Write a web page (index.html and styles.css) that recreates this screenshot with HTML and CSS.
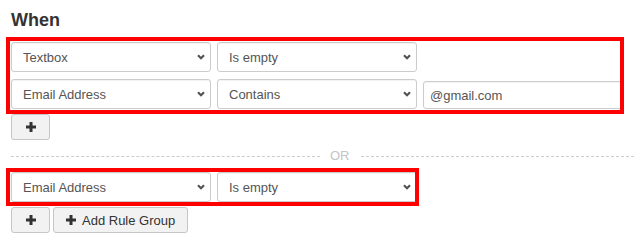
FILE: index.html
```html
<!DOCTYPE html>
<html lang="en">
<head>
<meta charset="utf-8">
<title>When rules</title>
<link rel="stylesheet" href="styles.css">
</head>
<body>
<div class="page">
  <h2 class="title">When</h2>

  <div class="group">
    <div class="rules rules-a">
      <div class="rule">
        <select class="field"><option>Textbox</option></select>
        <select class="field"><option>Is empty</option></select>
      </div>
      <div class="rule rule-end">
        <select class="field"><option>Email Address</option></select>
        <select class="field"><option>Contains</option></select>
        <input class="value" type="text" value="@gmail.com">
      </div>
    </div>
    <div class="actions">
      <button class="btn btn-icon" type="button" aria-label="Add rule">
        <svg class="plus" width="10" height="10" viewBox="0 0 10 10"><rect x="0" y="3.5" width="10" height="3"/><rect x="3.5" y="0" width="3" height="10"/></svg>
      </button>
    </div>
  </div>

  <div class="divider">
    <span class="line line-left"></span>
    <span class="or">OR</span>
    <span class="line"></span>
  </div>

  <div class="group">
    <div class="rules rules-b">
      <div class="rule">
        <select class="field"><option>Email Address</option></select>
        <select class="field"><option>Is empty</option></select>
      </div>
    </div>
    <div class="actions actions-b">
      <button class="btn btn-icon" type="button" aria-label="Add rule">
        <svg class="plus" width="10" height="10" viewBox="0 0 10 10"><rect x="0" y="3.5" width="10" height="3"/><rect x="3.5" y="0" width="3" height="10"/></svg>
      </button>
      <button class="btn" type="button">
        <svg class="plus" width="10" height="10" viewBox="0 0 10 10"><rect x="0" y="3.5" width="10" height="3"/><rect x="3.5" y="0" width="3" height="10"/></svg>
        <span>Add Rule Group</span>
      </button>
    </div>
  </div>
</div>
</body>
</html>
```

FILE: styles.css
```css
html, body {
  overflow: hidden;
}

body {
  margin: 0;
  padding: 10px 0 0 0;
  background: #fff;
  font-family: "Liberation Sans", Arial, sans-serif;
  font-size: 13px;
  color: #555;
}

.page {
  padding-left: 11px;
}

.title {
  margin: 0;
  font-size: 18px;
  line-height: 20px;
  font-weight: bold;
  color: #333;
}

.rules {
  box-sizing: border-box;
  margin-left: -5px;
  border: 4px solid #ff0000;
  overflow: hidden;
  display: flex;
  flex-direction: column;
  gap: 7px;
}

.rules-a {
  margin-top: 7px;
  width: 618px;
  padding: 1px 0 1px 1px;
}

.rules-b {
  width: 413px;
  padding: 0 0 0 1px;
}

.rule {
  display: flex;
  gap: 6px;
  align-items: center;
}

.rule-end {
  align-items: flex-end;
}

.field {
  -webkit-appearance: none;
  appearance: none;
  box-sizing: border-box;
  flex: none;
  width: 200px;
  height: 30px;
  margin: 0;
  padding: 0 20px 0 11px;
  border: 1px solid #ccc;
  border-radius: 3px;
  background-color: #fff;
  background-image: url("data:image/svg+xml;utf8,<svg xmlns='http://www.w3.org/2000/svg' width='8' height='6' viewBox='0 0 8 6'><path d='M1 1.2l3 3 3-3' fill='none' stroke='%23555' stroke-width='2.2'/></svg>");
  background-repeat: no-repeat;
  background-position: right 5px center;
  box-shadow: inset 0 1px 1px rgba(0, 0, 0, 0.05);
  font-family: "Liberation Sans", Arial, sans-serif;
  font-size: 13px;
  color: #555;
}

.value {
  box-sizing: border-box;
  flex: none;
  width: 200px;
  height: 28px;
  margin: 0;
  padding: 0 6px;
  border: 1px solid #ccc;
  border-radius: 3px;
  background: #fff;
  box-shadow: inset 0 1px 1px rgba(0, 0, 0, 0.05);
  font-family: "Liberation Sans", Arial, sans-serif;
  font-size: 13px;
  color: #555;
}

.actions {
  display: flex;
  gap: 3px;
}

.actions-b {
  margin-top: 1px;
}

.btn {
  box-sizing: border-box;
  height: 26px;
  margin: 0;
  padding: 0 12px;
  display: inline-flex;
  align-items: center;
  gap: 6px;
  border: 1px solid #c6c6c6;
  border-radius: 3px;
  background: #f2f2f2;
  font-family: "Liberation Sans", Arial, sans-serif;
  font-size: 13px;
  color: #333;
}

.btn-icon {
  width: 39px;
  justify-content: center;
  padding: 0;
}

.plus {
  display: block;
  fill: #333;
}

.divider {
  height: 14px;
  margin: 9px 0 5px 0;
  display: flex;
  align-items: center;
}

.line {
  flex: 1;
  border-top: 1px dashed #ccc;
}

.line-left {
  flex: none;
  width: 309px;
}

.or {
  padding: 0 11px 0 10px;
  font-size: 13px;
  line-height: 14px;
  color: #c4c4c4;
}
```
